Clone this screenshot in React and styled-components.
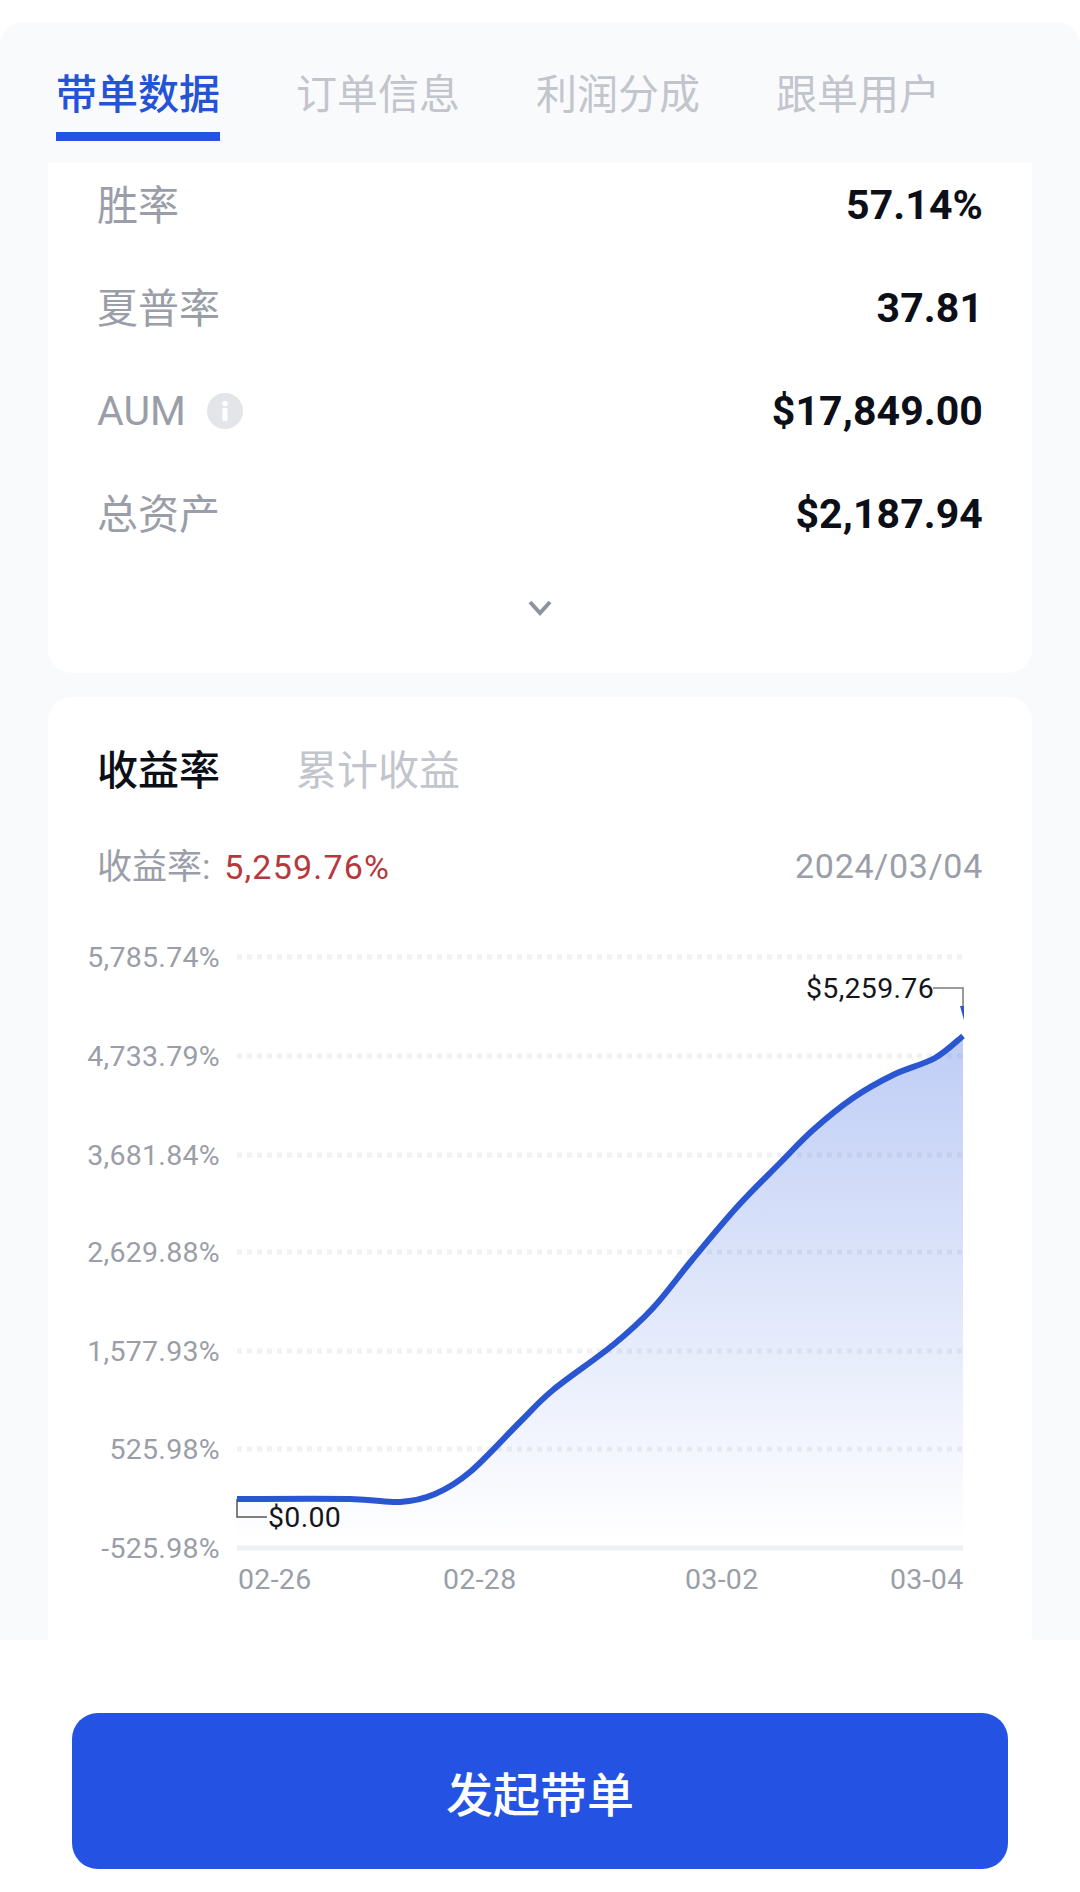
import React from 'react';
import styled, { createGlobalStyle } from 'styled-components';

const GlobalStyle = createGlobalStyle`
  html, body {
    margin: 0;
    padding: 0;
    background: #ffffff;
  }
  * {
    box-sizing: border-box;
  }
`;

const FONT = `Roboto, "Noto Sans CJK SC", sans-serif`;

const Page = styled.div`
  width: 1080px;
  height: 1892px;
  padding-top: 22px;
  background: #ffffff;
  font-family: ${FONT};
  overflow: hidden;
`;

const Panel = styled.div`
  height: 1618px;
  background: #f9fafc;
  border-radius: 24px 24px 0 0;
  overflow: hidden;
`;

const TabBar = styled.div`
  height: 141px;
  padding: 0 56px;
  display: flex;
  gap: 76px;
`;

const Tab = styled.div`
  height: 119px;
  padding-top: 45px;
  font-size: 41px;
  line-height: 56px;
  font-weight: ${props => (props.$active ? 500 : 400)};
  color: ${props => (props.$active ? '#2453d6' : '#c2c5cc')};
  border-bottom: ${props => (props.$active ? '9px solid #2453e3' : 'none')};
`;

const Card = styled.div`
  margin: 0 48px;
  background: #ffffff;
  padding: 0 49px;
`;

const StatsCard = styled(Card)`
  height: 510px;
  border-radius: 0 0 24px 24px;
  display: flex;
  flex-direction: column;
  gap: 19px;
`;

const StatRow = styled.div`
  height: 84px;
  flex: none;
  display: flex;
  align-items: center;
  justify-content: space-between;
`;

const StatLabel = styled.div`
  display: flex;
  align-items: center;
  gap: 21px;
  font-size: 41px;
  color: #9a9ea8;
  padding-bottom: ${props => (props.$latin ? 0 : '6px')};
`;

const StatValue = styled.div`
  font-size: 41px;
  font-weight: 700;
  letter-spacing: 0.1px;
  color: #0c0f18;
`;

const InfoIcon = styled.svg`
  width: 36px;
  height: 36px;
`;

const Expand = styled.div`
  height: 85px;
  margin-top: -19px;
  flex: none;
  display: flex;
  align-items: center;
  justify-content: center;
  padding-top: 19px;
`;

const ChartCard = styled(Card)`
  height: 943px;
  margin-top: 24px;
  padding-top: 46px;
  border-radius: 24px 24px 0 0;
`;

const ChartTabs = styled.div`
  display: flex;
  gap: 76px;
`;

const ChartTab = styled.div`
  font-size: 41px;
  line-height: 56px;
  font-weight: ${props => (props.$active ? 500 : 400)};
  color: ${props => (props.$active ? '#0c0f18' : '#c2c5cc')};
`;

const Summary = styled.div`
  margin-top: 43px;
  height: 48px;
  display: flex;
  align-items: center;
  justify-content: space-between;
  font-size: 34px;
  color: #9a9ea8;
`;

const SummaryLabel = styled.span`
  font-size: 35px;
  padding-bottom: 6px;
`;

const SummaryValue = styled.span`
  margin-left: 5px;
  font-size: 34px;
  letter-spacing: 1.2px;
  color: #b5393c;
`;

const SummaryDate = styled.span`
  letter-spacing: 0.7px;
`;

const ChartSvg = styled.svg`
  display: block;
  width: 984px;
  height: 680px;
  margin: 40px -49px 0;
  font-family: ${FONT};
  letter-spacing: 0.3px;
`;

const Footer = styled.div`
  padding: 73px 72px 0;
`;

const PrimaryButton = styled.button`
  width: 100%;
  height: 156px;
  border: 0;
  border-radius: 26px;
  background: #2453e3;
  color: #ffffff;
  font-family: ${FONT};
  font-size: 47px;
  font-weight: 500;
`;

const tabs = ['带单数据', '订单信息', '利润分成', '跟单用户'];

const stats = [
  { label: '胜率', value: '57.14%' },
  { label: '夏普率', value: '37.81' },
  { label: 'AUM', value: '$17,849.00', info: true },
  { label: '总资产', value: '$2,187.94' }
];

const yAxis = [
  { label: '5,785.74%', y: 957 },
  { label: '4,733.79%', y: 1056 },
  { label: '3,681.84%', y: 1155 },
  { label: '2,629.88%', y: 1252 },
  { label: '1,577.93%', y: 1351 },
  { label: '525.98%', y: 1449 }
];

const xAxis = [
  { label: '02-26', x: 238 },
  { label: '02-28', x: 443 },
  { label: '03-02', x: 685 },
  { label: '03-04', x: 890 }
];

const curve = [
  [237, 1499], [350, 1499], [400, 1502], [435, 1494], [470, 1472],
  [520, 1422], [553, 1390], [613, 1345], [653, 1308], [692, 1260],
  [737, 1207], [780, 1163], [813, 1130], [853, 1098], [893, 1075],
  [935, 1058], [963, 1036]
];

// catmull-rom through the sampled points
const smoothPath = points => {
  let d = `M${points[0][0]} ${points[0][1]}`;
  for (let i = 0; i < points.length - 1; i++) {
    const p0 = points[i - 1] || points[i];
    const p1 = points[i];
    const p2 = points[i + 1];
    const p3 = points[i + 2] || p2;
    const c1x = p1[0] + (p2[0] - p0[0]) / 6;
    const c1y = p1[1] + (p2[1] - p0[1]) / 6;
    const c2x = p2[0] - (p3[0] - p1[0]) / 6;
    const c2y = p2[1] - (p3[1] - p1[1]) / 6;
    d += ` C${c1x} ${c1y} ${c2x} ${c2y} ${p2[0]} ${p2[1]}`;
  }
  return d;
};

const linePath = smoothPath(curve);

const Chart = () => (
  <ChartSvg viewBox="48 930 984 680">
    <defs>
      <linearGradient id="areaFill" gradientUnits="userSpaceOnUse" x1="0" y1="1040" x2="0" y2="1540">
        <stop offset="0" stopColor="#2a5ae0" stopOpacity="0.3" />
        <stop offset="1" stopColor="#2a5ae0" stopOpacity="0" />
      </linearGradient>
    </defs>

    {yAxis.map(tick => (
      <g key={tick.label}>
        <text x="220" y={tick.y + 10} textAnchor="end" fontSize="28.5" fill="#9a9ea8">{tick.label}</text>
        <line x1="237" x2="962" y1={tick.y} y2={tick.y} stroke="#f0f1f3" strokeWidth="5" strokeDasharray="5 5" />
      </g>
    ))}
    <text x="220" y="1558" textAnchor="end" fontSize="28.5" fill="#9a9ea8">-525.98%</text>
    <line x1="237" x2="963" y1="1548" y2="1548" stroke="#eef0f6" strokeWidth="5" />

    <path d={`${linePath} L963 1548 L237 1548 Z`} fill="url(#areaFill)" />
    <path d={linePath} fill="none" stroke="#2a56d1" strokeWidth="6" />

    <path d="M933 988 H963 V1008" fill="none" stroke="#77797f" strokeWidth="1.5" />
    <path d="M960 1006 L964 1006 L964 1020 Z" fill="#2a56d1" />
    <text x="806" y="998" fontSize="28.5" fill="#14161c">$5,259.76</text>

    <path d="M237 1499 V1517 H267" fill="none" stroke="#55575c" strokeWidth="1.5" />
    <text x="268" y="1527" fontSize="28.5" fill="#14161c">$0.00</text>

    {xAxis.map(tick => (
      <text key={tick.label} x={tick.x} y="1589" fontSize="28.5" fill="#9a9ea8">{tick.label}</text>
    ))}
  </ChartSvg>
);

const App = () => (
  <Page>
    <GlobalStyle />
    <Panel>
      <TabBar>
        {tabs.map((tab, i) => (
          <Tab key={tab} $active={i === 0}>{tab}</Tab>
        ))}
      </TabBar>

      <StatsCard>
        {stats.map(stat => (
          <StatRow key={stat.label}>
            <StatLabel $latin={stat.info}>
              {stat.label}
              {stat.info && (
                <InfoIcon viewBox="0 0 36 36">
                  <circle cx="18" cy="18" r="18" fill="#e4e5e8" />
                  <rect x="15.5" y="15" width="5" height="13" rx="1" fill="#ffffff" />
                  <circle cx="18" cy="10.5" r="2.8" fill="#ffffff" />
                </InfoIcon>
              )}
            </StatLabel>
            <StatValue>{stat.value}</StatValue>
          </StatRow>
        ))}
        <Expand>
          <svg width="24" height="16" viewBox="0 0 24 16">
            <path d="M2 2 L12 13 L22 2" fill="none" stroke="#8f93a0" strokeWidth="4" />
          </svg>
        </Expand>
      </StatsCard>

      <ChartCard>
        <ChartTabs>
          <ChartTab $active>收益率</ChartTab>
          <ChartTab>累计收益</ChartTab>
        </ChartTabs>
        <Summary>
          <SummaryLabel>收益率: <SummaryValue>5,259.76%</SummaryValue></SummaryLabel>
          <SummaryDate>2024/03/04</SummaryDate>
        </Summary>
        <Chart />
      </ChartCard>
    </Panel>

    <Footer>
      <PrimaryButton>发起带单</PrimaryButton>
    </Footer>
  </Page>
);

export default App;
